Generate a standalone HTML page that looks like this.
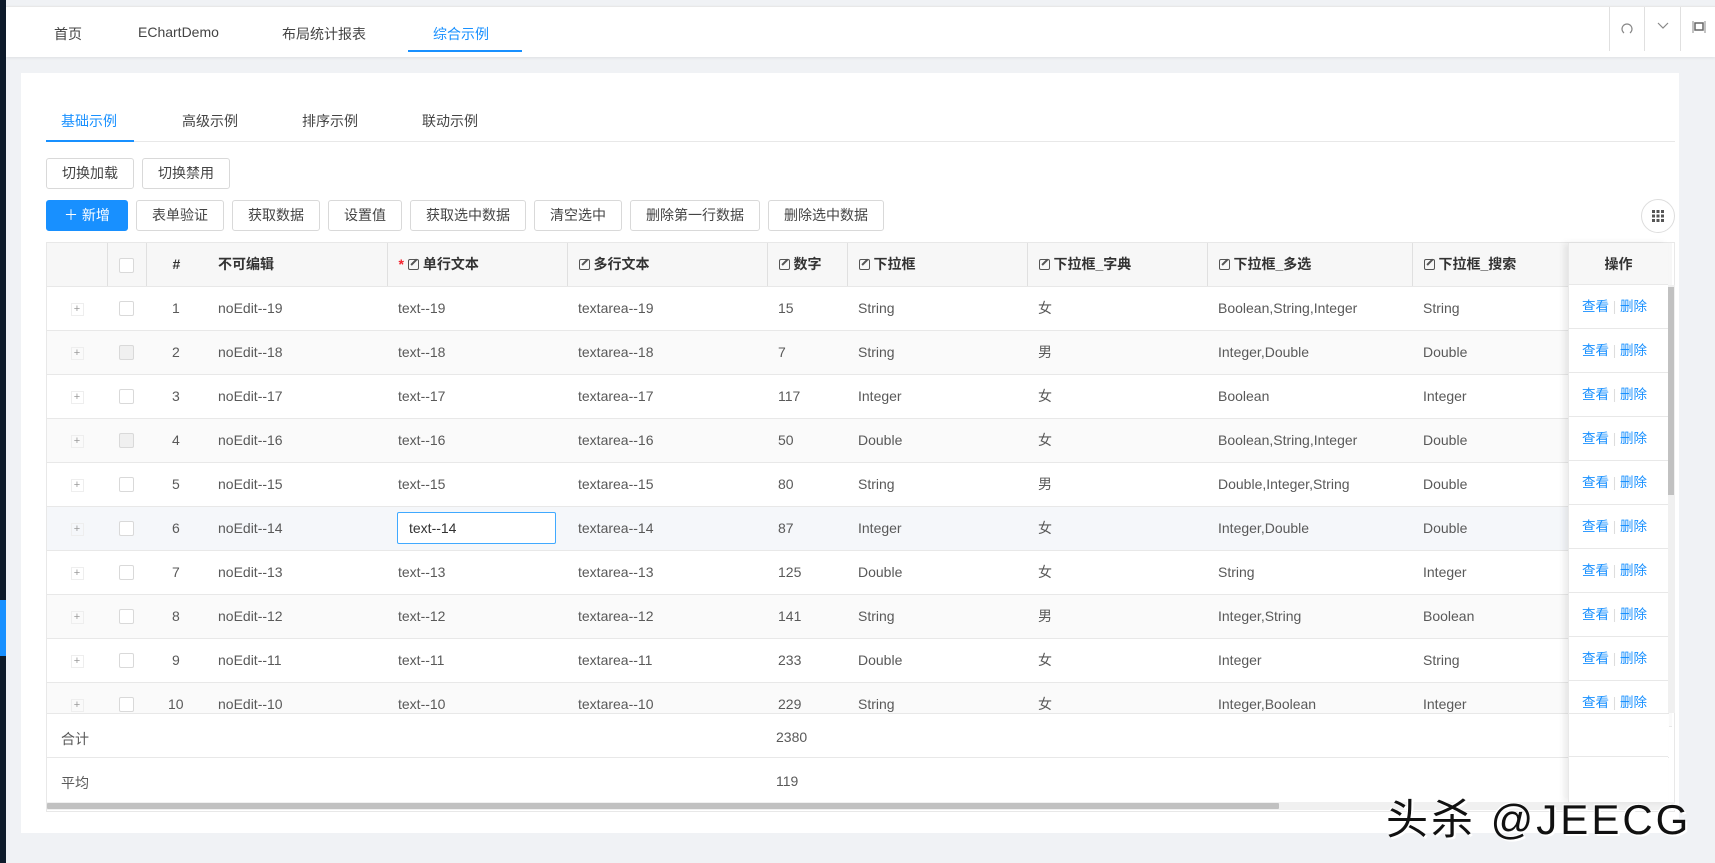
<!DOCTYPE html>
<html><head><meta charset="utf-8"><style>
*{box-sizing:border-box;margin:0;padding:0}
body{width:1715px;height:863px;background:#f0f2f5;font-family:"Liberation Sans","Noto Sans CJK SC",sans-serif;font-size:14px;color:#595959;position:relative;overflow:hidden}
.abs{position:absolute}
.left{left:0;top:0;width:6px;height:863px;background:#0e1b2b}
.left2{left:0;top:600px;width:6px;height:56px;background:#1890ff}
.top{left:6px;top:6px;width:1709px;height:51px;background:#fff;box-shadow:0 1px 3px rgba(0,0,0,.08);border-top:1px solid #e8e8e8}
.tt{position:absolute;top:17px;font-size:14px;color:#444}
.card{left:21px;top:73px;width:1658px;height:760px;background:#fff}
.btn{position:absolute;height:31px;border:1px solid #d9d9d9;border-radius:3px;background:#fff;font-size:14px;color:#444;line-height:29px;text-align:center}
table{position:absolute;left:46px;top:242px;border-collapse:collapse;table-layout:fixed}
td,th{height:44px;border-bottom:1px solid #e8e8e8;white-space:nowrap;overflow:hidden;font-size:14px;text-align:left;padding:0 0 0 11px}
th{background:#f7f7f7;color:#333;font-weight:bold;height:43px}
tr.s td{background:#fafafa}
tr.h td{background:#f5f7fa}
td.c,th.c{text-align:center;padding:0}
td.n,th.n{padding-left:26px}
td.e,th.e{padding-left:17px}
.ck{display:inline-block;width:15px;height:15px;border:1px solid #d9d9d9;border-radius:2px;background:#fff;vertical-align:middle}
.ckd{background:#f0f0f0}
.pl{display:inline-block;width:13px;height:13px;border:1px solid #eee;font-size:11px;line-height:11px;text-align:center;color:#999;vertical-align:middle}
.ed{display:inline-block;width:11px;height:11px;border:1.3px solid #555;border-radius:2px;margin-right:4px;vertical-align:-1px;position:relative}
.ed:after{content:"";position:absolute;left:4px;top:-2px;width:1.5px;height:8px;background:#555;transform:rotate(45deg)}
.sep{border-left:1px solid #e0e0e0}
a{color:#1890ff;text-decoration:none}
.op{position:absolute;left:1568px;width:100px;background:#fff;box-shadow:-4px 0 6px rgba(0,0,0,.08)}
.op .r{height:44px;line-height:44px;border-bottom:1px solid #e8e8e8;padding-left:13px;font-size:13.5px}
</style></head><body>
<div class="abs left"></div><div class="abs left2"></div>
<div class="abs top">
 <span class="tt" style="left:48px">首页</span>
 <span class="tt" style="left:132px">EChartDemo</span>
 <span class="tt" style="left:276px">布局统计报表</span>
 <span class="tt" style="left:427px;color:#1890ff">综合示例</span>
 <div class="abs" style="left:402px;top:43px;width:114px;height:2px;background:#1890ff"></div>
 <div class="abs" style="left:1603px;top:0;width:1px;height:44px;background:#e0e0e0"></div>
 <div class="abs" style="left:1638px;top:0;width:1px;height:44px;background:#e0e0e0"></div>
 <div class="abs" style="left:1674px;top:0;width:1px;height:44px;background:#e0e0e0"></div>
 <svg class="abs" style="left:1613px;top:13px" width="16" height="16"><path d="M5 13A5 5 0 1 1 11 13" fill="none" stroke="#888" stroke-width="1.2"/></svg>
 <svg class="abs" style="left:1650px;top:14px" width="14" height="10"><path d="M2 2l5 5 5-5" fill="none" stroke="#888" stroke-width="1.2"/></svg>
 <svg class="abs" style="left:1686px;top:13px" width="14" height="14"><rect x="3" y="3" width="8" height="7" fill="none" stroke="#666" stroke-width="1.5"/><path d="M1 1v12M13 1v12" stroke="#888"/></svg>
</div>
<div class="abs card"></div>
<div class="abs" style="left:61px;top:111px;color:#1890ff">基础示例</div>
<div class="abs" style="left:182px;top:111px;color:#444">高级示例</div>
<div class="abs" style="left:302px;top:111px;color:#444">排序示例</div>
<div class="abs" style="left:422px;top:111px;color:#444">联动示例</div>
<div class="abs" style="left:46px;top:141px;width:1629px;height:1px;background:#e8e8e8"></div>
<div class="abs" style="left:46px;top:140px;width:88px;height:2px;background:#1890ff"></div>
<div class="btn" style="left:46px;top:158px;width:88px">切换加载</div>
<div class="btn" style="left:142px;top:158px;width:88px">切换禁用</div>
<div class="btn" style="left:46px;top:200px;width:82px;background:#1890ff;border-color:#1890ff;color:#fff">＋ 新增</div>
<div class="btn" style="left:136px;top:200px;width:88px">表单验证</div>
<div class="btn" style="left:232px;top:200px;width:88px">获取数据</div>
<div class="btn" style="left:328px;top:200px;width:74px">设置值</div>
<div class="btn" style="left:410px;top:200px;width:116px">获取选中数据</div>
<div class="btn" style="left:534px;top:200px;width:88px">清空选中</div>
<div class="btn" style="left:630px;top:200px;width:130px">删除第一行数据</div>
<div class="btn" style="left:768px;top:200px;width:116px">删除选中数据</div>
<div class="abs" style="left:1641px;top:199px;width:34px;height:34px;border:1px solid #ddd;border-radius:50%"></div>
<svg class="abs" style="left:1652px;top:210px" width="12" height="12" fill="#555"><rect x="0" y="0" width="3" height="3"/><rect x="4.5" y="0" width="3" height="3"/><rect x="9" y="0" width="3" height="3"/><rect x="0" y="4.5" width="3" height="3"/><rect x="4.5" y="4.5" width="3" height="3"/><rect x="9" y="4.5" width="3" height="3"/><rect x="0" y="9" width="3" height="3"/><rect x="4.5" y="9" width="3" height="3"/><rect x="9" y="9" width="3" height="3"/></svg>
<div class="abs" style="left:46px;top:242px;width:1629px;height:570px;border:1px solid #e8e8e8;overflow:hidden">
<table style="left:0;top:0">
<colgroup><col width="60"><col width="39"><col width="55"><col width="186"><col width="180"><col width="200"><col width="80"><col width="180"><col width="180"><col width="205"><col width="260"></colgroup>
<tr><th class="c"></th><th class="sep c"><span class="ck"></span></th><th class="sep n">#</th><th class="e">不可编辑</th><th class="sep"><span style="color:#f5222d">*</span> <span class="ed"></span>单行文本</th><th class="sep"><span class="ed"></span>多行文本</th><th class="sep"><span class="ed"></span>数字</th><th class="sep"><span class="ed"></span>下拉框</th><th class="sep"><span class="ed"></span>下拉框_字典</th><th class="sep"><span class="ed"></span>下拉框_多选</th><th class="sep"><span class="ed"></span>下拉框_搜索</th></tr>
<tr><td class="c"><span class="pl">+</span></td><td class="c"><span class="ck"></span></td><td class="n">1</td><td class="e">noEdit--19</td><td>text--19</td><td>textarea--19</td><td>15</td><td>String</td><td>女</td><td>Boolean,String,Integer</td><td>String</td></tr>
<tr class="s"><td class="c"><span class="pl">+</span></td><td class="c"><span class="ck ckd"></span></td><td class="n">2</td><td class="e">noEdit--18</td><td>text--18</td><td>textarea--18</td><td>7</td><td>String</td><td>男</td><td>Integer,Double</td><td>Double</td></tr>
<tr><td class="c"><span class="pl">+</span></td><td class="c"><span class="ck"></span></td><td class="n">3</td><td class="e">noEdit--17</td><td>text--17</td><td>textarea--17</td><td>117</td><td>Integer</td><td>女</td><td>Boolean</td><td>Integer</td></tr>
<tr class="s"><td class="c"><span class="pl">+</span></td><td class="c"><span class="ck ckd"></span></td><td class="n">4</td><td class="e">noEdit--16</td><td>text--16</td><td>textarea--16</td><td>50</td><td>Double</td><td>女</td><td>Boolean,String,Integer</td><td>Double</td></tr>
<tr><td class="c"><span class="pl">+</span></td><td class="c"><span class="ck"></span></td><td class="n">5</td><td class="e">noEdit--15</td><td>text--15</td><td>textarea--15</td><td>80</td><td>String</td><td>男</td><td>Double,Integer,String</td><td>Double</td></tr>
<tr class="h"><td class="c"><span class="pl">+</span></td><td class="c"><span class="ck"></span></td><td class="n">6</td><td class="e">noEdit--14</td><td style="padding-left:10px"><span style="display:inline-block;width:159px;height:32px;border:1px solid #40a9ff;background:#fff;border-radius:2px;padding-left:11px;line-height:30px;color:#333">text--14</span></td><td>textarea--14</td><td>87</td><td>Integer</td><td>女</td><td>Integer,Double</td><td>Double</td></tr>
<tr><td class="c"><span class="pl">+</span></td><td class="c"><span class="ck"></span></td><td class="n">7</td><td class="e">noEdit--13</td><td>text--13</td><td>textarea--13</td><td>125</td><td>Double</td><td>女</td><td>String</td><td>Integer</td></tr>
<tr class="s"><td class="c"><span class="pl">+</span></td><td class="c"><span class="ck"></span></td><td class="n">8</td><td class="e">noEdit--12</td><td>text--12</td><td>textarea--12</td><td>141</td><td>String</td><td>男</td><td>Integer,String</td><td>Boolean</td></tr>
<tr><td class="c"><span class="pl">+</span></td><td class="c"><span class="ck"></span></td><td class="n">9</td><td class="e">noEdit--11</td><td>text--11</td><td>textarea--11</td><td>233</td><td>Double</td><td>女</td><td>Integer</td><td>String</td></tr>
<tr class="s"><td class="c"><span class="pl">+</span></td><td class="c"><span class="ck"></span></td><td class="n" style="padding-left:22px">10</td><td class="e">noEdit--10</td><td>text--10</td><td>textarea--10</td><td>229</td><td>String</td><td>女</td><td>Integer,Boolean</td><td>Integer</td></tr>
</table>
</div>
<div class="abs" style="left:47px;top:713px;width:1622px;height:88px;background:#fff;border-top:1px solid #e8e8e8"></div>
<div class="abs" style="left:47px;top:757px;width:1622px;height:1px;background:#e8e8e8"></div>
<div class="abs" style="left:61px;top:729px">合计</div><div class="abs" style="left:776px;top:729px">2380</div>
<div class="abs" style="left:61px;top:773px">平均</div><div class="abs" style="left:776px;top:773px">119</div>
<div class="abs" style="left:47px;top:802px;width:1628px;height:8px;background:#f0f0f0"></div>
<div class="abs" style="left:47px;top:803px;width:1232px;height:6px;background:#c1c1c1;border-radius:1px"></div>
<div class="op" style="top:243px;height:559px;border-left:1px solid #e8e8e8;overflow:hidden">
 <div style="height:42px;background:#f7f7f7;border-bottom:1px solid #e8e8e8;text-align:center;line-height:42px;font-weight:bold;color:#333">操作</div>
 <div style="height:428px;overflow:hidden">
 <div class="r"><a>查看</a> <span style="color:#ddd">|</span> <a>删除</a></div>
 <div class="r"><a>查看</a> <span style="color:#ddd">|</span> <a>删除</a></div>
 <div class="r"><a>查看</a> <span style="color:#ddd">|</span> <a>删除</a></div>
 <div class="r"><a>查看</a> <span style="color:#ddd">|</span> <a>删除</a></div>
 <div class="r"><a>查看</a> <span style="color:#ddd">|</span> <a>删除</a></div>
 <div class="r"><a>查看</a> <span style="color:#ddd">|</span> <a>删除</a></div>
 <div class="r"><a>查看</a> <span style="color:#ddd">|</span> <a>删除</a></div>
 <div class="r"><a>查看</a> <span style="color:#ddd">|</span> <a>删除</a></div>
 <div class="r"><a>查看</a> <span style="color:#ddd">|</span> <a>删除</a></div>
 <div class="r"><a>查看</a> <span style="color:#ddd">|</span> <a>删除</a></div>
 </div>
 <div style="height:44px;border-top:1px solid #e8e8e8;border-bottom:1px solid #e8e8e8"></div>
</div>
<div class="abs" style="left:1668px;top:285px;width:7px;height:428px;background:#f0f0f0"></div>
<div class="abs" style="left:1668px;top:287px;width:6px;height:208px;background:#c1c1c1"></div>
<div class="abs" style="left:1386px;top:786px;font-size:42px;color:#111;letter-spacing:3px;text-shadow:2px 2px 0 #fff,-1px -1px 0 #fff">头杀 @JEECG</div>
</body></html>
